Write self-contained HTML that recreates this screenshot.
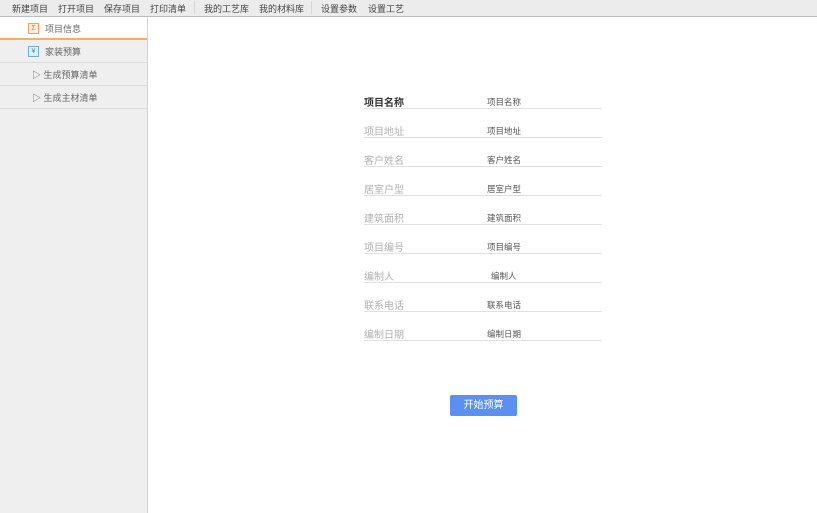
<!DOCTYPE html>
<html><head><meta charset="utf-8"><style>
*{margin:0;padding:0;box-sizing:border-box}
body{width:817px;height:513px;overflow:hidden;background:#fff;font-family:"Liberation Sans","Noto Sans CJK SC",sans-serif;position:relative}
.tb{position:absolute;left:0;top:0;width:817px;height:17px;background:#ececec;border-bottom:1px solid #bdbdbd;font-size:9px;color:#444}
.tb span{position:absolute;top:2px}
.sep{position:absolute;top:1px;width:1px;height:13px;background:#d8d8d8}
.sb{position:absolute;left:0;top:17px;width:148px;height:496px;background:#efefef;border-right:1px solid #d6d6d6}
.it{position:absolute;left:0;width:147px;height:23px;border-bottom:1px solid #dcdcdc;font-size:9px;color:#666}
.it span{position:absolute;top:5px}
.ic{position:absolute;top:6px;left:28px;width:11px;height:11px;border:1px solid;font-size:7px;line-height:9px;text-align:center}
.lab{position:absolute;left:364px;font-size:10px;color:#b0b0b0}
.val{position:absolute;left:487px;font-size:8.5px;color:#555}
.ln{position:absolute;left:364px;width:238px;height:1px;background:#e0e0e0}
.btn{position:absolute;left:450px;top:395px;width:67px;height:21px;background:#5b8ff0;border-radius:2px;color:#fff;font-size:10px;text-align:center;line-height:21px}
</style></head><body>
<div class="tb">
<span style="left:12px">新建项目</span><span style="left:58px">打开项目</span><span style="left:104px">保存项目</span><span style="left:150px">打印清单</span>
<div class="sep" style="left:194px"></div>
<span style="left:204px">我的工艺库</span><span style="left:259px">我的材料库</span>
<div class="sep" style="left:311px"></div>
<span style="left:321px">设置参数</span><span style="left:368px">设置工艺</span>
</div>
<div class="sb">
<div class="it" style="top:0;background:#fff;border-bottom:2px solid #f0b070"><div class="ic" style="border-color:#f0a060;color:#e08040;background:#fdf1e6">Σ</div><span style="left:45px">项目信息</span></div>
<div class="it" style="top:23px"><div class="ic" style="border-color:#6ab0d8;color:#4a90c0;background:#e0f0fa">¥</div><span style="left:45px">家装预算</span></div>
<div class="it" style="top:46px"><span style="left:32px">▷ 生成预算清单</span></div>
<div class="it" style="top:69px"><span style="left:32px">▷ 生成主材清单</span></div>
</div>
<div class="lab" style="top:94px;color:#333;font-weight:bold">项目名称</div><div class="val" style="top:96px">项目名称</div><div class="ln" style="top:108px"></div>
<div class="lab" style="top:123px">项目地址</div><div class="val" style="top:125px">项目地址</div><div class="ln" style="top:137px"></div>
<div class="lab" style="top:152px">客户姓名</div><div class="val" style="top:154px">客户姓名</div><div class="ln" style="top:166px"></div>
<div class="lab" style="top:181px">居室户型</div><div class="val" style="top:183px">居室户型</div><div class="ln" style="top:195px"></div>
<div class="lab" style="top:210px">建筑面积</div><div class="val" style="top:212px">建筑面积</div><div class="ln" style="top:224px"></div>
<div class="lab" style="top:239px">项目编号</div><div class="val" style="top:241px">项目编号</div><div class="ln" style="top:253px"></div>
<div class="lab" style="top:268px">编制人</div><div class="val" style="top:270px;left:491px">编制人</div><div class="ln" style="top:282px"></div>
<div class="lab" style="top:297px">联系电话</div><div class="val" style="top:299px">联系电话</div><div class="ln" style="top:311px"></div>
<div class="lab" style="top:326px">编制日期</div><div class="val" style="top:328px">编制日期</div><div class="ln" style="top:340px"></div>
<div class="btn">开始预算</div>
</body></html>
